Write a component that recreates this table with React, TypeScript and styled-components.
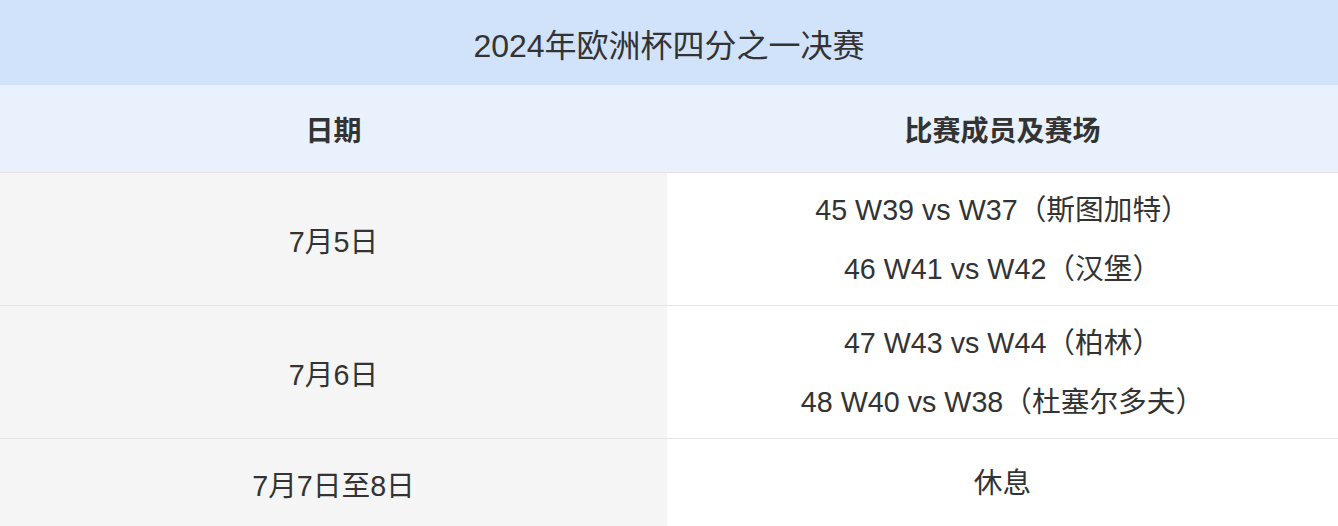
import styled, { createGlobalStyle } from 'styled-components';

const GlobalStyle = createGlobalStyle`
    body {
        margin: 0;
        background: #ffffff;
        font-family: "Liberation Sans", "Noto Sans CJK SC", sans-serif;
        color: #333333;
    }
`

const rows = [
    { date: '7月5日', matches: ['45 W39 vs W37（斯图加特）', '46 W41 vs W42（汉堡）'], height: 133 },
    { date: '7月6日', matches: ['47 W43 vs W44（柏林）', '48 W40 vs W38（杜塞尔多夫）'], height: 133 },
    { date: '7月7日至8日', matches: ['休息'], height: 88 },
]

function App() {
    return (
        <>
            <GlobalStyle />
            <Table>
                <Title>2024年欧洲杯四分之一决赛</Title>
                <HeaderRow>
                    <HeaderCell>日期</HeaderCell>
                    <HeaderCell>比赛成员及赛场</HeaderCell>
                </HeaderRow>
                {rows.map(row => (
                    <BodyRow key={row.date} $height={row.height}>
                        <DateCell>{row.date}</DateCell>
                        <MatchCell>
                            {row.matches.map(m => (
                                <Line key={m}>{m}</Line>
                            ))}
                        </MatchCell>
                    </BodyRow>
                ))}
            </Table>
        </>
    )
}

const Table = styled.div`
    width: 1338px;
    display: flex;
    flex-direction: column;
`

const Title = styled.div`
    height: 85px;
    background: #d1e2fb;
    display: flex;
    align-items: center;
    justify-content: center;
    font-size: 32px;
    color: #333333;
`

const HeaderRow = styled.div`
    height: 87px;
    display: grid;
    grid-template-columns: 667px 1fr;
    background: #e9f1fd;
    border-bottom: 1px solid #e2e2e2;
`

const HeaderCell = styled.div`
    display: flex;
    align-items: center;
    justify-content: center;
    font-size: 28px;
    font-weight: bold;
    color: #333333;
`

const BodyRow = styled.div<{ $height: number }>`
    height: ${props => props.$height}px;
    display: grid;
    grid-template-columns: 667px 1fr;
    border-bottom: 1px solid #e4e4e4;
    box-sizing: border-box;
    &:last-child {
        border-bottom: none;
    }
`

const DateCell = styled.div`
    background: #f5f5f5;
    display: flex;
    align-items: center;
    justify-content: center;
    font-size: 28.7px;
`

const MatchCell = styled.div`
    background: #ffffff;
    display: flex;
    flex-direction: column;
    align-items: center;
    justify-content: center;
    gap: 15px;
    font-size: 28.7px;
`

const Line = styled.div`
    line-height: 44px;
`

export default App;
